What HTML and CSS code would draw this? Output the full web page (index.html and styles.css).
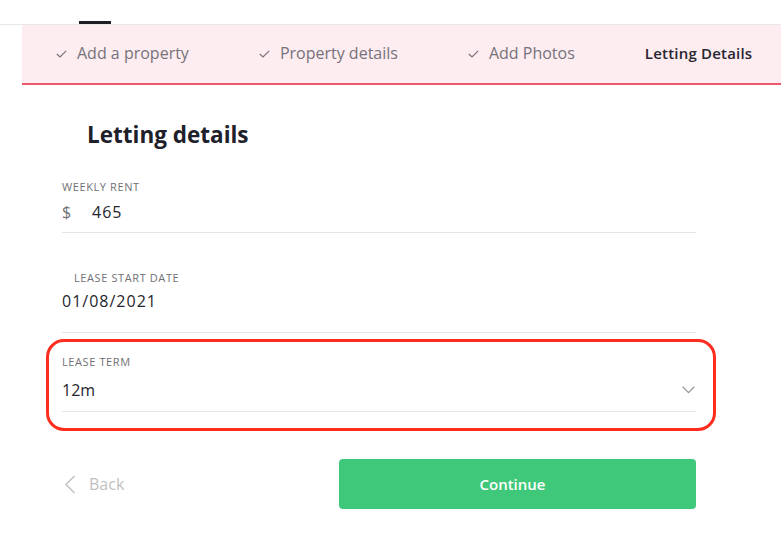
FILE: index.html
```html
<!DOCTYPE html>
<html lang="en">
<head>
    <meta charset="UTF-8">
    <meta name="viewport" content="width=device-width, initial-scale=1.0">
    <title>Letting details</title>
    <link rel="stylesheet" href="styles.css">
</head>
<body>
    <div class="topbar">
        <span class="tab-mark"></span>
    </div>

    <nav class="steps">
        <div class="step done">
            <svg class="tick" width="11" height="8" viewBox="0 0 11 8"><polyline points="0.8,4 4,7 10.2,0.8" fill="none" stroke="currentColor" stroke-width="1.2"/></svg>
            <span>Add a property</span>
        </div>
        <div class="step done">
            <svg class="tick" width="11" height="8" viewBox="0 0 11 8"><polyline points="0.8,4 4,7 10.2,0.8" fill="none" stroke="currentColor" stroke-width="1.2"/></svg>
            <span>Property details</span>
        </div>
        <div class="step done">
            <svg class="tick" width="11" height="8" viewBox="0 0 11 8"><polyline points="0.8,4 4,7 10.2,0.8" fill="none" stroke="currentColor" stroke-width="1.2"/></svg>
            <span>Add Photos</span>
        </div>
        <div class="step active">
            <span>Letting Details</span>
        </div>
    </nav>

    <main class="form">
        <h1 class="title">Letting details</h1>

        <div class="field rent">
            <div class="label">WEEKLY RENT</div>
            <div class="value spaced"><span class="currency">$</span>465</div>
        </div>

        <div class="field date">
            <div class="label">LEASE START DATE</div>
            <div class="value spaced">01/08/2021</div>
        </div>

        <div class="field term">
            <div class="label">LEASE TERM</div>
            <div class="value select">
                <span>12m</span>
                <svg width="13" height="8" viewBox="0 0 13 8"><polyline points="0.7,0.8 6.5,6.6 12.3,0.8" fill="none" stroke="#9a9a9e" stroke-width="1.3"/></svg>
            </div>
            <div class="highlight"></div>
        </div>

        <div class="actions">
            <a class="back" href="#">
                <svg width="12" height="19" viewBox="0 0 12 19"><polyline points="10.5,1 2,9.5 10.5,18" fill="none" stroke="#c4c4c4" stroke-width="1.6"/></svg>
                <span>Back</span>
            </a>
            <button class="continue" type="button">Continue</button>
        </div>
    </main>
</body>
</html>
```

FILE: styles.css
```css
body {
    margin: 0;
    font-family: 'Open Sans', 'Noto Sans', sans-serif;
    background-color: #fff;
    color: #22222c;
}

.topbar {
    height: 24px;
    border-bottom: 1px solid #e8e8ea;
    display: flex;
    align-items: flex-end;
}

.tab-mark {
    display: block;
    width: 32px;
    height: 3px;
    margin-left: 79px;
    background-color: #1e1e26;
}

.steps {
    margin-left: 22px;
    height: 56px;
    padding-bottom: 2px;
    background-color: #fdecf0;
    border-bottom: 2px solid #f1566f;
    display: flex;
    align-items: center;
    gap: 70px;
    padding-left: 34px;
    font-size: 16px;
}

.step {
    display: flex;
    align-items: center;
    gap: 10px;
    color: #76737b;
    font-weight: 500;
    white-space: nowrap;
}

.step .tick {
    margin-top: 1px;
}

.step.active {
    color: #262631;
    font-weight: 600;
    font-size: 15px;
    letter-spacing: 0.2px;
}

.form {
    width: 634px;
    margin-left: 62px;
}

.title {
    margin: 36px 0 0 25px;
    font-size: 22.5px;
    line-height: 28px;
    font-weight: 700;
    color: #20202a;
}

.field {
    border-bottom: 1px solid #e4e4e6;
}

.label {
    font-size: 11px;
    line-height: 14px;
    color: #707075;
    letter-spacing: 0.6px;
}

.value {
    font-size: 16px;
    line-height: 24px;
    color: #25252d;
}

.spaced {
    letter-spacing: 1px;
}

.rent {
    margin-top: 31px;
    padding-bottom: 8px;
}

.rent .value {
    margin-top: 6px;
}

.currency {
    display: inline-block;
    width: 30px;
    color: #6e6e74;
}

.date {
    padding-top: 38px;
    padding-bottom: 19px;
}

.date .label {
    padding-left: 12px;
}

.date .value {
    margin-top: 4px;
}

.term {
    position: relative;
    padding-top: 22px;
    padding-bottom: 9px;
}

.term .value {
    margin-top: 9px;
}

.select {
    display: flex;
    align-items: center;
    justify-content: space-between;
    padding-right: 1px;
}

.highlight {
    position: absolute;
    left: -16px;
    right: -20px;
    top: 6px;
    bottom: -20px;
    border: 3px solid #ff2d20;
    border-radius: 18px;
}

.actions {
    margin-top: 47px;
    display: flex;
    align-items: center;
    justify-content: space-between;
}

.back {
    display: flex;
    align-items: center;
    gap: 13px;
    margin-left: 2px;
    color: #bfbfbf;
    text-decoration: none;
    font-size: 16px;
}

.continue {
    width: 357px;
    height: 50px;
    padding: 0 10px 0 0;
    border: none;
    border-radius: 4px;
    background-color: #3fc87a;
    color: #fff;
    font-family: inherit;
    font-size: 15px;
    font-weight: 600;
    cursor: pointer;
}
```
